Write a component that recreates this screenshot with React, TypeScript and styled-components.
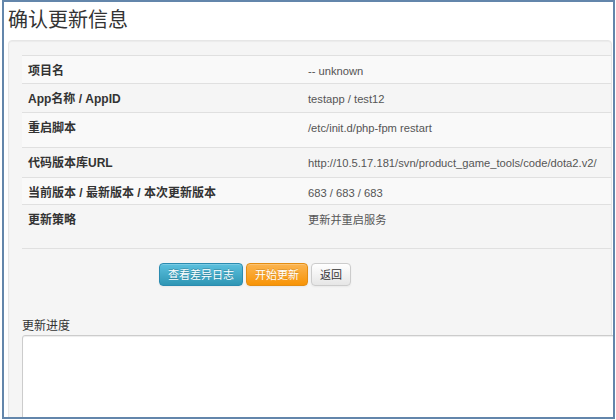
import { FC } from 'react'
import styled, { createGlobalStyle } from 'styled-components'

const GlobalStyle = createGlobalStyle`
  html, body {
    margin: 0;
    padding: 0;
    background: #fff;
  }
  body {
    font-family: "Liberation Sans", "Noto Sans CJK SC", sans-serif;
    color: #333;
  }
`

const Frame = styled.div`
  box-sizing: border-box;
  width: 613px;
  height: 419px;
  margin-left: 2px;
  border: 2px solid #6386ab;
  overflow: hidden;
  background: #fff;
`

const Title = styled.h3`
  margin: 0;
  padding: 4px 0 0 4px;
  height: 34px;
  font-family: "Noto Sans CJK SC", sans-serif;
  font-size: 20px;
  font-weight: normal;
  line-height: 26px;
  color: #333;
`

const Well = styled.div`
  margin: 0 1px 0 4px;
  padding: 14px 0 0 13px;
  min-height: 420px;
  background: #f5f5f5;
  border: 1px solid #e6e6e6;
  border-radius: 4px;
  box-shadow: inset 0 1px 1px rgba(0, 0, 0, 0.04);
`

const InfoTable = styled.table`
  width: 100%;
  table-layout: fixed;
  border-collapse: collapse;
  border-spacing: 0;
  border-bottom: 1px solid #e0e0e0;
`

const LabelCol = styled.col`
  width: 280px;
`

const Row = styled.tr<{ $striped: boolean }>`
  background: ${({ $striped }) => ($striped ? '#f9f9f9' : 'transparent')};
  td {
    border-top: 1px solid #e0e0e0;
  }
`

const Label = styled.td<{ $h: number }>`
  box-sizing: border-box;
  height: ${({ $h }) => $h}px;
  padding: 5px 6px 0;
  vertical-align: top;
  font-size: 12px;
  font-weight: bold;
  line-height: 20px;
  color: #333;
  white-space: nowrap;
`

const Value = styled.td`
  padding: 5px 6px 0;
  vertical-align: top;
  font-size: 11.2px;
  line-height: 20px;
  color: #555;
  white-space: nowrap;
`

const Actions = styled.div`
  display: flex;
  gap: 3px;
  margin-top: 14px;
  padding-left: 137px;
`

const variants = {
  info: {
    bg: 'linear-gradient(#5bc0de, #2f96b4)',
    border: '#2a8bb0',
    color: '#fff',
    shadow: '0 -1px 0 rgba(0,0,0,0.2)'
  },
  warning: {
    bg: 'linear-gradient(#fbb450, #f89406)',
    border: '#e38d13',
    color: '#fff',
    shadow: '0 -1px 0 rgba(0,0,0,0.15)'
  },
  plain: {
    bg: 'linear-gradient(#ffffff, #e6e6e6)',
    border: '#cccccc',
    color: '#333',
    shadow: 'none'
  }
}

type Variant = keyof typeof variants

const Button = styled.button<{ $variant: Variant }>`
  box-sizing: border-box;
  height: 23px;
  padding: 0 8px;
  border: 1px solid ${({ $variant }) => variants[$variant].border};
  border-radius: 4px;
  background: ${({ $variant }) => variants[$variant].bg};
  color: ${({ $variant }) => variants[$variant].color};
  text-shadow: ${({ $variant }) => variants[$variant].shadow};
  box-shadow: inset 0 1px 0 rgba(255, 255, 255, 0.2), 0 1px 2px rgba(0, 0, 0, 0.05);
  font-family: "Noto Sans CJK SC", sans-serif;
  font-size: 11px;
  line-height: 21px;
  cursor: pointer;
`

const ProgressLabel = styled.div`
  margin-top: 30px;
  font-family: "Noto Sans CJK SC", sans-serif;
  font-size: 12px;
  line-height: 18px;
  color: #333;
`

const ProgressBox = styled.textarea`
  display: block;
  box-sizing: border-box;
  width: 640px;
  height: 120px;
  margin-top: 1px;
  border: 1px solid #ccc;
  border-radius: 3px;
  background: #fff;
  box-shadow: inset 0 1px 1px rgba(0, 0, 0, 0.075);
  resize: none;
`

const rows = [
  { label: '项目名', value: '-- unknown', h: 28 },
  { label: 'App名称 / AppID', value: 'testapp / test12', h: 29 },
  { label: '重启脚本', value: '/etc/init.d/php-fpm restart', h: 35 },
  {
    label: '代码版本库URL',
    value: 'http://10.5.17.181/svn/product_game_tools/code/dota2.v2/',
    h: 30
  },
  { label: '当前版本 / 最新版本 / 本次更新版本', value: '683 / 683 / 683', h: 27 },
  { label: '更新策略', value: '更新并重启服务', h: 44 }
]

const App: FC = () => {
  return (
    <>
      <GlobalStyle />
      <Frame>
        <Title>确认更新信息</Title>
        <Well>
          <InfoTable>
            <colgroup>
              <LabelCol />
              <col />
            </colgroup>
            <tbody>
              {rows.map((row, i) => (
                <Row key={row.label} $striped={i % 2 === 0}>
                  <Label $h={row.h}>{row.label}</Label>
                  <Value>{row.value}</Value>
                </Row>
              ))}
            </tbody>
          </InfoTable>
          <Actions>
            <Button $variant="info">查看差异日志</Button>
            <Button $variant="warning">开始更新</Button>
            <Button $variant="plain">返回</Button>
          </Actions>
          <ProgressLabel>更新进度</ProgressLabel>
          <ProgressBox readOnly />
        </Well>
      </Frame>
    </>
  )
}

export default App
